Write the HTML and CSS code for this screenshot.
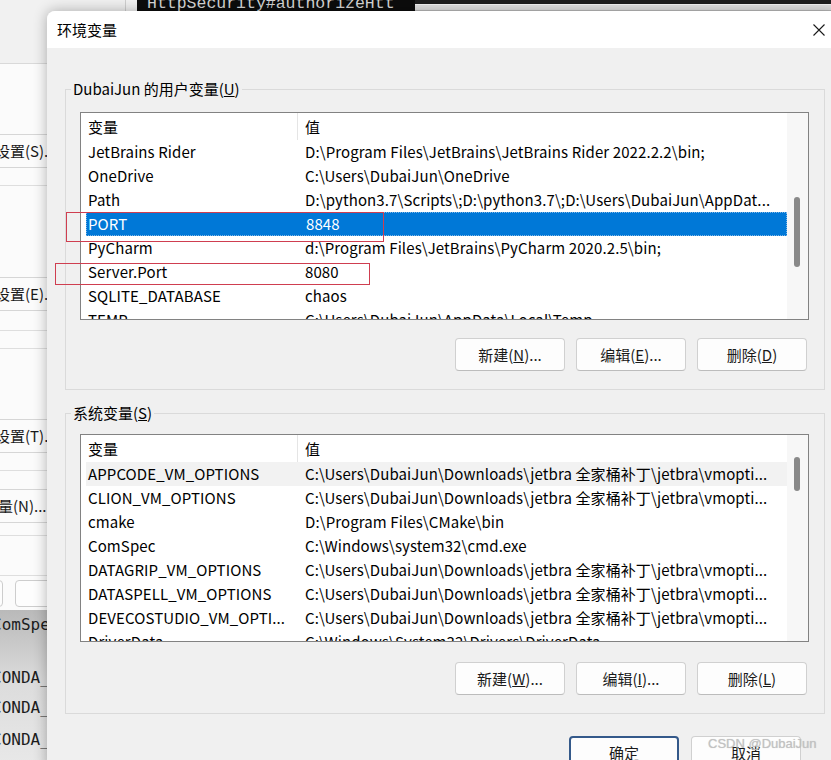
FILE: index.html
```html
<!DOCTYPE html>
<html lang="zh-CN">
<head>
    <meta charset="UTF-8">
    <meta name="viewport" content="width=device-width, initial-scale=1.0">
    <title>环境变量</title>
    <link rel="stylesheet" href="styles.css">
</head>
<body>
<div class="desktop">

    <!-- windows behind the dialog, only their edges are visible -->
    <div class="strip-left"></div>
    <div class="terminal"><div class="terminal-line">HttpSecurity#authorizeHtt</div></div>
    <div class="strip-right"></div>

    <div class="sysprops">
        <div class="sp-head"></div>
        <div class="sp-btn sp-btn-s">设置(S)...</div>
        <div class="sp-line sp-line-a"></div>
        <div class="sp-btn sp-btn-e">设置(E)...</div>
        <div class="sp-line sp-line-b"></div>
        <div class="sp-line sp-line-c"></div>
        <div class="sp-btn sp-btn-t">设置(T)...</div>
        <div class="sp-line sp-line-c"></div>
        <div class="sp-btn sp-btn-n">环境变量(N)...</div>
        <div class="sp-line sp-line-d"></div>
        <div class="sp-line sp-line-e"></div>
        <div class="sp-okrow">
            <div class="sp-ok sp-ok-first"></div>
            <div class="sp-ok"></div>
        </div>
        <div class="sp-ide">
            <div class="ide-line ide-1">ComSpec</div>
            <div class="ide-line ide-2">CONDA_PREFIX</div>
            <div class="ide-line ide-3">CONDA_EXE</div>
            <div class="ide-line ide-4">CONDA_SHLVL</div>
        </div>
    </div>

    <div class="dialog">
        <div class="titlebar">
            <span class="title">环境变量</span>
            <svg class="close" viewBox="0 0 12 12"><path d="M0.5 0.5L11.5 11.5M11.5 0.5L0.5 11.5"/></svg>
        </div>

        <div class="dialog-body">
            <fieldset class="group group-user">
                <legend>DubaiJun 的用户变量(<u>U</u>)</legend>
                <div class="list">
                    <div class="list-rows">
                        <div class="list-head"><span>变量</span><span>值</span></div>
                        <div class="row"><span>JetBrains Rider</span><span>D:\Program Files\JetBrains\JetBrains Rider 2022.2.2\bin;</span></div>
                        <div class="row"><span>OneDrive</span><span>C:\Users\DubaiJun\OneDrive</span></div>
                        <div class="row"><span>Path</span><span>D:\python3.7\Scripts\;D:\python3.7\;D:\Users\DubaiJun\AppDat...</span></div>
                        <div class="row selected"><span>PORT</span><span>8848</span></div>
                        <div class="row"><span>PyCharm</span><span>d:\Program Files\JetBrains\PyCharm 2020.2.5\bin;</span></div>
                        <div class="row"><span>Server.Port</span><span>8080</span></div>
                        <div class="row"><span>SQLITE_DATABASE</span><span>chaos</span></div>
                        <div class="row"><span>TEMP</span><span>C:\Users\DubaiJun\AppData\Local\Temp</span></div>
                    </div>
                    <div class="scrollbar"><div class="thumb thumb-user"></div></div>
                </div>
                <div class="buttons">
                    <button class="btn">新建(<u>N</u>)...</button>
                    <button class="btn">编辑(<u>E</u>)...</button>
                    <button class="btn">删除(<u>D</u>)</button>
                </div>
            </fieldset>

            <fieldset class="group group-system">
                <legend>系统变量(<u>S</u>)</legend>
                <div class="list">
                    <div class="list-rows">
                        <div class="list-head"><span>变量</span><span>值</span></div>
                        <div class="row hover"><span>APPCODE_VM_OPTIONS</span><span>C:\Users\DubaiJun\Downloads\jetbra 全家桶补丁\jetbra\vmopti...</span></div>
                        <div class="row"><span>CLION_VM_OPTIONS</span><span>C:\Users\DubaiJun\Downloads\jetbra 全家桶补丁\jetbra\vmopti...</span></div>
                        <div class="row"><span>cmake</span><span>D:\Program Files\CMake\bin</span></div>
                        <div class="row"><span>ComSpec</span><span>C:\Windows\system32\cmd.exe</span></div>
                        <div class="row"><span>DATAGRIP_VM_OPTIONS</span><span>C:\Users\DubaiJun\Downloads\jetbra 全家桶补丁\jetbra\vmopti...</span></div>
                        <div class="row"><span>DATASPELL_VM_OPTIONS</span><span>C:\Users\DubaiJun\Downloads\jetbra 全家桶补丁\jetbra\vmopti...</span></div>
                        <div class="row"><span>DEVECOSTUDIO_VM_OPTI...</span><span>C:\Users\DubaiJun\Downloads\jetbra 全家桶补丁\jetbra\vmopti...</span></div>
                        <div class="row"><span>DriverData</span><span>C:\Windows\System32\Drivers\DriverData</span></div>
                    </div>
                    <div class="scrollbar"><div class="thumb thumb-system"></div></div>
                </div>
                <div class="buttons">
                    <button class="btn">新建(<u>W</u>)...</button>
                    <button class="btn">编辑(<u>I</u>)...</button>
                    <button class="btn">删除(<u>L</u>)</button>
                </div>
            </fieldset>

            <div class="footer">
                <button class="btn btn-default">确定</button>
                <button class="btn">取消</button>
            </div>
        </div>
    </div>

    <!-- red highlight boxes drawn over the list -->
    <div class="mark mark-port"></div>
    <div class="mark mark-server"></div>

    <div class="watermark">CSDN @DubaiJun</div>
</div>
</body>
</html>
```

FILE: styles.css
```css
html, body {
    margin: 0;
    padding: 0;
}
body {
    width: 831px;
    height: 760px;
    overflow: hidden;
    background-color: #f2f2f2;
}
.desktop {
    position: relative;
    width: 831px;
    height: 760px;
    overflow: hidden;
}

/* top edge strips */
.strip-left {
    position: absolute;
    left: 0;
    top: 0;
    width: 125px;
    height: 11px;
    background-color: #f1f1f1;
    border-right: 1px solid #cfcfcf;
}
.terminal {
    position: absolute;
    left: 137px;
    top: 0;
    width: 278px;
    height: 11px;
    background-color: #0c0c0c;
    overflow: hidden;
}
.terminal-line {
    margin-top: -4px;
    padding-left: 10px;
    font-family: "Liberation Mono", monospace;
    font-size: 16.5px;
    line-height: 16px;
    color: #d6d6d6;
    white-space: nowrap;
}
.strip-right {
    position: absolute;
    left: 415px;
    top: 0;
    width: 416px;
    height: 11px;
    background: linear-gradient(#1e1e1e 0 4px, #f4f4f4 4px 5px, #e2e2e2 5px 10px, #bcbcbc 10px 11px);
}

/* system properties window on the left */
.sysprops {
    position: absolute;
    left: 0;
    top: 0;
    width: 60px;
    height: 760px;
    overflow: hidden;
    background-color: #fbfbfb;
    font-family: "Noto Sans CJK SC", sans-serif;
    font-size: 15px;
    color: #1a1a1a;
}
.sp-head {
    height: 63px;
    background-color: #f1f1f1;
    border-bottom: 1px solid #d9d9d9;
}
.sp-btn {
    height: 32px;
    line-height: 32px;
    border-top: 1px solid #d6d6d6;
    border-bottom: 1px solid #d6d6d6;
    white-space: nowrap;
    text-indent: -5px;
}
.sp-btn-s { margin-top: 70px; }
.sp-btn-e { margin-top: 91px; }
.sp-btn-t { margin-top: 70px; }
.sp-btn-n { margin-top: 18px; text-indent: -47px; }
.sp-line {
    border-top: 1px solid #dedede;
}
.sp-line-a { margin-top: 17px; }
.sp-line-b { margin-top: 19px; }
.sp-line-c { margin-top: 17px; }
.sp-line-d { margin-top: 12px; }
.sp-line-e { margin-top: 39px; }
.sp-okrow {
    display: flex;
    gap: 12px;
    margin-top: 4px;
    height: 27px;
}
.sp-ok {
    width: 53px;
    border: 1px solid #cdcdcd;
    border-radius: 4px;
    background-color: #fdfdfd;
}
.sp-ok-first {
    width: 24px;
    margin-left: -19px;
}
.sp-ide {
    margin-top: 5px;
    height: 160px;
    background: linear-gradient(#b9b9b9, #dcdcdc 45%, #e9e9e9);
    font-family: "DejaVu Sans Mono", monospace;
    font-size: 16px;
    line-height: 30px;
    color: #1c1c1c;
    text-indent: -8px;
    white-space: nowrap;
}
.ide-1 { margin-top: -2px; }
.ide-2 { margin-top: 23px; }
.ide-4 { margin-top: 2px; }

/* the dialog */
.dialog {
    position: absolute;
    left: 47px;
    top: 11px;
    width: 790px;
    height: 760px;
    border-radius: 8px 0 0 0;
    background-color: #f0f0f0;
    box-shadow: 0 0 14px rgba(0, 0, 0, 0.3);
    overflow: hidden;
    font-family: "Noto Sans CJK SC", sans-serif;
    font-size: 15px;
    color: #000;
}
.titlebar {
    height: 37px;
    background-color: #fff;
    display: flex;
    align-items: center;
    justify-content: space-between;
    padding: 0 12px 0 10px;
}
.close {
    width: 12px;
    height: 12px;
    fill: none;
    stroke: #1a1a1a;
    stroke-width: 1.1;
}
.dialog-body {
    padding: 31px 12px 0 18px;
}
.group {
    margin: 0;
    min-width: 0;
    border: 1px solid #dadada;
    padding: 13px 15px 18px 5px;
}
.group legend {
    padding: 0 2px;
    line-height: 20px;
}
.group-system {
    margin-top: 13px;
    padding-top: 11px;
}

/* list view */
.list {
    box-sizing: border-box;
    display: flex;
    height: 208px;
    margin-left: 9px;
    border: 1px solid #828282;
    background-color: #fff;
    overflow: hidden;
}
.list-rows {
    flex: 1;
    min-width: 0;
}
.list-head {
    display: grid;
    grid-template-columns: 217px minmax(0, 1fr);
    height: 27px;
    line-height: 27px;
}
.list-head span {
    padding-left: 7px;
}
.list-head span:first-child {
    border-right: 1px solid #e5e5e5;
}
.row {
    display: grid;
    grid-template-columns: 212px minmax(0, 1fr);
    margin-left: 5px;
    height: 24px;
    line-height: 24px;
    white-space: nowrap;
    letter-spacing: 0.1px;
}
.row span {
    overflow: hidden;
}
.row span:first-child {
    padding-left: 2px;
}
.row span:last-child {
    padding-left: 7px;
}
.row.selected {
    box-sizing: border-box;
    background-color: #0078d7;
    color: #fff;
    border: 1px dotted #7fb6e6;
    line-height: 22px;
}
.row.selected span:first-child {
    padding-left: 1px;
}
.row.hover {
    background-color: #f2f2f2;
}
.scrollbar {
    width: 21px;
    background-color: #f7f7f7;
}
.thumb {
    width: 6px;
    margin-left: 7px;
    border-radius: 3px;
    background-color: #898989;
}
.thumb-user {
    margin-top: 84px;
    height: 70px;
}
.thumb-system {
    margin-top: 22px;
    height: 34px;
}

/* buttons */
.buttons {
    display: flex;
    justify-content: flex-end;
    gap: 11px;
    margin-top: 18px;
    margin-right: 2px;
}
.group-system .buttons {
    margin-top: 20px;
}
.btn {
    box-sizing: border-box;
    width: 110px;
    height: 33px;
    padding: 0;
    font-family: inherit;
    font-size: 15px;
    color: #1a1a1a;
    background-color: #fdfdfd;
    border: 1px solid #d0d0d0;
    border-bottom-color: #bcbcbc;
    border-radius: 4px;
}
.footer {
    display: flex;
    justify-content: flex-end;
    gap: 12px;
    margin-top: 22px;
    padding-right: 24px;
}
.btn-default {
    border: 2px solid #34598a;
}

/* annotation */
.mark {
    position: absolute;
    border: 1px solid #cf3e50;
}
.mark-port {
    left: 66px;
    top: 212px;
    width: 316px;
    height: 28px;
}
.mark-server {
    left: 55px;
    top: 263px;
    width: 313px;
    height: 20px;
}
.watermark {
    position: absolute;
    left: 708px;
    top: 736px;
    font-family: "Liberation Sans", sans-serif;
    font-size: 13px;
    color: #c2c2c2;
    text-shadow: 0 0 1px rgba(0, 0, 0, 0.2);
    white-space: nowrap;
}
```
